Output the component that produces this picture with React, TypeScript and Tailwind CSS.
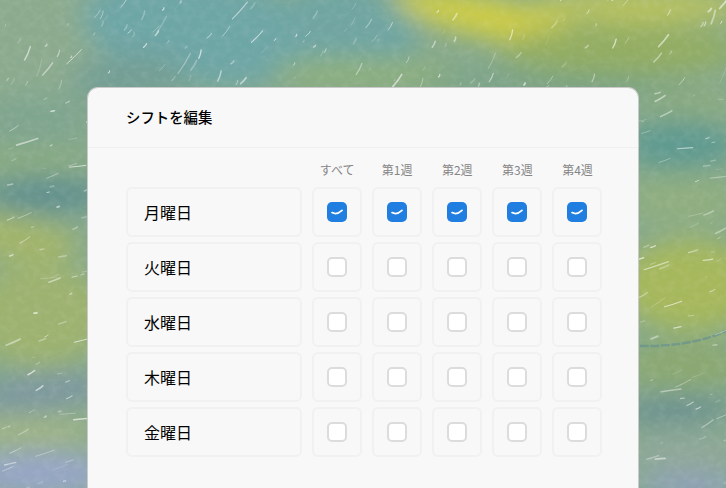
const days = ["月曜日", "火曜日", "水曜日", "木曜日", "金曜日"];
const columns = ["すべて", "第1週", "第2週", "第3週", "第4週"];

// painted backdrop: soft colour patches plus small white impasto marks
const patches = [
  { cx: 30, cy: 40, rx: 80, ry: 70, fill: "#8cab8e", rot: 0 },
  { cx: 200, cy: 30, rx: 120, ry: 55, fill: "#6ea6a6", rot: 8 },
  { cx: 130, cy: 80, rx: 60, ry: 25, fill: "#749f94", rot: 0 },
  { cx: 350, cy: 25, rx: 70, ry: 40, fill: "#6fa5a2", rot: 10 },
  { cx: 360, cy: 72, rx: 90, ry: 14, fill: "#8fb07c", rot: 0 },
  { cx: 490, cy: 18, rx: 100, ry: 20, fill: "#cfcd45", rot: 12 },
  { cx: 640, cy: 6, rx: 110, ry: 16, fill: "#bcc45c", rot: 0 },
  { cx: 620, cy: 50, rx: 120, ry: 26, fill: "#93ad62", rot: 0 },
  { cx: 560, cy: 84, rx: 140, ry: 10, fill: "#76a085", rot: 0 },
  { cx: 35, cy: 120, rx: 55, ry: 28, fill: "#7fa58f", rot: 0 },
  { cx: 30, cy: 160, rx: 60, ry: 12, fill: "#8bac80", rot: 0 },
  { cx: 45, cy: 195, rx: 60, ry: 18, fill: "#5f8f8e", rot: 0 },
  { cx: 10, cy: 238, rx: 70, ry: 22, fill: "#a3b56a", rot: 8 },
  { cx: 40, cy: 315, rx: 70, ry: 52, fill: "#9db270", rot: 0 },
  { cx: 40, cy: 392, rx: 70, ry: 18, fill: "#7d97a0", rot: -6 },
  { cx: 30, cy: 432, rx: 70, ry: 14, fill: "#a3b585", rot: 0 },
  { cx: 40, cy: 474, rx: 75, ry: 22, fill: "#97a6c8", rot: 0 },
  { cx: 690, cy: 104, rx: 55, ry: 15, fill: "#8cab80", rot: 0 },
  { cx: 680, cy: 145, rx: 55, ry: 26, fill: "#5f9a90", rot: 0 },
  { cx: 685, cy: 200, rx: 60, ry: 28, fill: "#8fae80", rot: 0 },
  { cx: 690, cy: 285, rx: 70, ry: 46, fill: "#a6b85c", rot: 0 },
  { cx: 685, cy: 365, rx: 65, ry: 22, fill: "#8ba86f", rot: 0 },
  { cx: 675, cy: 410, rx: 60, ry: 14, fill: "#6a9090", rot: -3 },
  { cx: 685, cy: 455, rx: 60, ry: 22, fill: "#8fa79a", rot: 0 },
  { cx: 690, cy: 487, rx: 55, ry: 10, fill: "#8f9fc4", rot: 0 },
];

function buildMarks() {
  const marks: { x: number; y: number; dx: number; dy: number; w: number; o: number }[] = [];
  let seed = 41;
  const rand = () => {
    seed = (seed * 16807) % 2147483647;
    return seed / 2147483647;
  };
  for (let i = 0; i < 620; i++) {
    const y = rand() * 488;
    const len = 2 + rand() * rand() * 24;
    // strokes stand steep along the top edge, flatter down the sides
    const angle = y < 90 ? -0.75 - rand() * 0.55 : -0.05 - rand() * 0.55;
    marks.push({
      x: rand() * 726,
      y,
      dx: Math.cos(angle) * len,
      dy: Math.sin(angle) * len,
      w: 0.6 + rand() * 1.2,
      o: 0.15 + rand() * 0.5,
    });
  }
  return marks;
}

function Backdrop() {
  return (
    <svg className="absolute inset-0" width={726} height={488} viewBox="0 0 726 488">
      <defs>
        <filter id="soft" x="-40%" y="-40%" width="180%" height="180%">
          <feGaussianBlur stdDeviation="13" />
        </filter>
        <filter id="grain" x="0" y="0" width="100%" height="100%">
          <feTurbulence type="fractalNoise" baseFrequency="0.12 0.14" numOctaves="2" seed="7" />
          <feColorMatrix values="0 0 0 0 1  0 0 0 0 1  0 0 0 0 1  1.6 0 0 0 -0.62" />
        </filter>
        <filter id="smudge">
          <feGaussianBlur stdDeviation="0.5" />
        </filter>
      </defs>
      <rect width={726} height={488} fill="#86a98c" />
      <g filter="url(#soft)">
        {patches.map((p, i) => (
          <ellipse key={i} cx={p.cx} cy={p.cy} rx={p.rx} ry={p.ry} fill={p.fill} transform={`rotate(${p.rot} ${p.cx} ${p.cy})`} />
        ))}
      </g>
      <rect width={726} height={488} filter="url(#grain)" opacity={0.1} />
      <path d="M640 346C665 346 695 345 726 331" stroke="#5f8a96" strokeWidth={2.5} strokeDasharray="9 1.5" fill="none" opacity={0.55} filter="url(#smudge)" />
      <g stroke="#ffffff" strokeLinecap="round" fill="none" filter="url(#smudge)">
        {buildMarks().map((m, i) => (
          <path key={i} d={`M${m.x} ${m.y}q${m.dx / 2 + 1} ${m.dy / 2} ${m.dx} ${m.dy}`} strokeWidth={m.w} opacity={m.o} />
        ))}
      </g>
    </svg>
  );
}

function Checkbox({ checked }: { checked: boolean }) {
  if (checked) {
    return (
      <span className="flex h-5 w-5 items-center justify-center rounded-[5px] bg-[#1f7ee0]">
        <svg width={20} height={20} viewBox="0 0 20 20" fill="none">
          <path d="M5 10.6C8 12.2 11.6 11.6 15 8.4" stroke="#fff" strokeWidth={1.7} strokeLinecap="round" />
        </svg>
      </span>
    );
  }
  return <span className="block h-5 w-5 rounded-[5px] border-2 border-[#dcdcdc] bg-white" />;
}

export default function App() {
  return (
    <div
      className="relative h-[488px] w-[726px] overflow-hidden pl-[87px] pt-[87px]"
      style={{ fontFamily: '"Noto Sans CJK JP", "Liberation Sans", sans-serif' }}
    >
      <Backdrop />
      <div className="relative h-[420px] w-[552px] rounded-t-[11px] border border-b-0 border-[#c9c9c9] bg-[#f8f8f8]">
        <div className="flex h-[60px] items-center border-b border-[#f0f0f0] pb-[2px] pl-[38px]">
          <h1 className="text-[14.4px] font-medium text-black">シフトを編集</h1>
        </div>

        <div className="pl-[38px] pr-[36px]">
          <div className="grid h-[39px] grid-cols-[176px_repeat(5,50px)] items-center gap-x-[10.1px] pt-[4px]">
            <span />
            {columns.map((col) => (
              <span key={col} className="text-center text-[12px] text-[#858585]">
                {col}
              </span>
            ))}
          </div>

          <div className="flex flex-col gap-[5px]">
            {days.map((day, row) => (
              <div key={day} className="grid h-[50px] grid-cols-[176px_repeat(5,50px)] gap-x-[10.1px]">
                <div className="flex items-center rounded-[6px] border-2 border-[#f1f1f1] pb-[1px] pl-[16px] text-[16px] text-black">
                  {day}
                </div>
                {columns.map((col) => (
                  <div key={col} className="flex items-center justify-center rounded-[6px] border-2 border-[#f1f1f1]">
                    <Checkbox checked={row === 0} />
                  </div>
                ))}
              </div>
            ))}
          </div>
        </div>
      </div>
    </div>
  );
}
